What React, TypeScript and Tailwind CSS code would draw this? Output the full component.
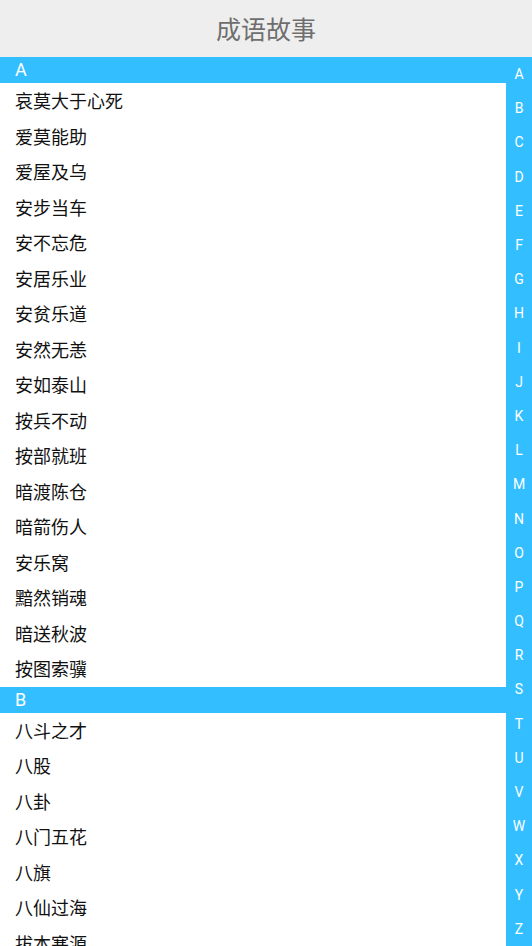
import React from 'react';

const sections = [
  {
    letter: 'A',
    items: [
      '哀莫大于心死', '爱莫能助', '爱屋及乌', '安步当车', '安不忘危', '安居乐业', '安贫乐道', '安然无恙',
      '安如泰山', '按兵不动', '按部就班', '暗渡陈仓', '暗箭伤人', '安乐窝', '黯然销魂', '暗送秋波', '按图索骥',
    ],
  },
  {
    letter: 'B',
    items: ['八斗之才', '八股', '八卦', '八门五花', '八旗', '八仙过海', '拔本塞源', '拔苗助长'],
  },
];

const letters = 'ABCDEFGHIJKLMNOPQRSTUVWXYZ'.split('');

export default function App() {
  return (
    <div className="w-[532px] h-[946px] overflow-hidden flex flex-col bg-white font-['Roboto','Noto_Sans_CJK_SC',sans-serif]">
      {/* Title bar */}
      <div className="h-[57px] shrink-0 bg-[#eeeeee] flex items-center justify-center">
        <span className="text-[25px] text-[#6e6e6e] font-['Noto_Sans_CJK_SC',sans-serif]">成语故事</span>
      </div>

      <div className="flex-1 flex min-h-0">
        {/* List */}
        <div className="flex-1 overflow-hidden">
          {sections.map((s) => (
            <div key={s.letter}>
              <div className="h-[26px] bg-[#33bfff] text-white text-[18px] pl-[15px] flex items-center leading-none">
                {s.letter}
              </div>
              {s.items.map((item) => (
                <div
                  key={item}
                  className="h-[35.5px] flex items-center pl-[15px] text-[18px] text-[#111111] font-['Noto_Sans_CJK_SC',sans-serif]"
                >
                  {item}
                </div>
              ))}
            </div>
          ))}
        </div>

        {/* Index sidebar */}
        <div className="w-[26px] shrink-0 bg-[#33bfff] flex flex-col">
          {letters.map((l) => (
            <div key={l} className="flex-1 flex items-center justify-center text-white text-[14px] leading-none">
              {l}
            </div>
          ))}
        </div>
      </div>
    </div>
  );
}
